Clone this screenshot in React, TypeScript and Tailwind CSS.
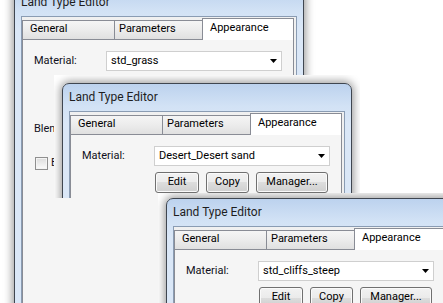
import React from "react";

const Arrow = () => (
  <svg width="7" height="4" viewBox="0 0 7 4" className="block">
    <path d="M0 0H7L3.5 4Z" fill="#000" />
  </svg>
);

function Button({ w, label }: { w: string; label: string }) {
  return (
    <div
      className={`${w} flex h-[21px] items-center justify-center rounded-[3px] border border-[#707070] bg-[linear-gradient(to_bottom,#f2f2f2_0%,#ebebeb_50%,#dddddd_50%,#cfcfcf_100%)] text-[11px] text-black shadow-[inset_0_0_0_1px_#fafafa]`}
    >
      {label}
    </div>
  );
}

function TabStrip() {
  return (
    <div className="relative z-10 -mb-px flex h-[22px] items-end text-[11px] text-black">
      <div className="flex h-[20px] w-[92px] items-center border-y border-l border-[#898c95] bg-[linear-gradient(to_bottom,#f5f5f5_0%,#ececec_50%,#e0e0e0_100%)] pb-px pl-[7px]">
        General
      </div>
      <div className="flex h-[20px] w-[88px] items-center border-y border-l border-[#898c95] bg-[linear-gradient(to_bottom,#f5f5f5_0%,#ececec_50%,#e0e0e0_100%)] pb-px pl-[4px]">
        Parameters
      </div>
      <div className="flex h-[22px] w-[92px] items-center border-x border-t border-[#898c95] bg-white pb-[3px] pl-[7px]">
        Appearance
      </div>
    </div>
  );
}

function Win({
  pos,
  material,
  extra,
}: {
  pos: string;
  material: string;
  extra?: boolean;
}) {
  return (
    <div
      className={`absolute ${pos} flex w-[290px] flex-col rounded-t-[7px] border border-[#3f4650] bg-[linear-gradient(to_bottom,#bcd2ee_0px,#d2e2f5_22px,#dae7f7_40px,#dae7f7_100%)] px-[6px] pb-[6px] pt-[27px] shadow-[0_0_8px_2px_rgba(0,0,0,0.38)]`}
    >
      <div className="absolute left-[6px] top-[6px] text-[12px] leading-[14px] text-[#1e1e1e]">
        Land Type Editor
      </div>
      <div className="flex flex-1 flex-col border border-[#8a9cb3] bg-[#f0f0f0] pr-[2px] pt-px">
        <TabStrip />
        <div className="flex flex-1 flex-col border border-[#898c95] bg-[#f5f5f5] pl-[11px] pt-[11px] text-[11px] text-[#101020]">
          <div className="flex h-[20px] items-center">
            <div className="w-[72px] leading-[14px]">Material:</div>
            <div className="relative flex h-[20px] w-[176px] items-center border border-[#cfcfcf] bg-white pl-[4px] text-black">
              {material}
              <div className="absolute right-[4px] top-[7px]">
                <Arrow />
              </div>
            </div>
          </div>
          <div className="ml-[73px] mt-[6px] flex gap-[7px]">
            <Button w="w-[44px]" label="Edit" />
            <Button w="w-[43px]" label="Copy" />
            <Button w="w-[72px]" label="Manager..." />
          </div>
          {extra && (
            <>
              <div className="mt-[24px] leading-[14px]">Blending</div>
              <div className="ml-px mt-[20px] flex items-center gap-[3px]">
                <div className="h-[13px] w-[13px] border border-[#8f8f8f] bg-[linear-gradient(to_bottom,#dcdcdc,#fbfbfb)] shadow-[inset_0_0_0_1px_#f4f4f4]" />
                <div className="leading-[14px]">Enable blending</div>
              </div>
            </>
          )}
          <div className="flex-1" />
        </div>
      </div>
    </div>
  );
}

export default function App() {
  return (
    <div className="relative h-[303px] w-[443px] overflow-hidden bg-white font-['Roboto',sans-serif]">
      <Win pos="left-[14px] top-[-12px] h-[340px]" material="std_grass" extra />
      <div className="absolute left-[54px] top-[75px] h-[123px] w-[306px] overflow-hidden bg-white">
        <Win pos="left-[8px] top-[8px] h-[200px]" material="Desert_Desert sand" />
      </div>
      <div className="absolute left-[158px] top-[193px] h-[110px] w-[285px] overflow-hidden bg-white">
        <Win pos="left-[8px] top-[5px] h-[200px]" material="std_cliffs_steep" />
      </div>
    </div>
  );
}
